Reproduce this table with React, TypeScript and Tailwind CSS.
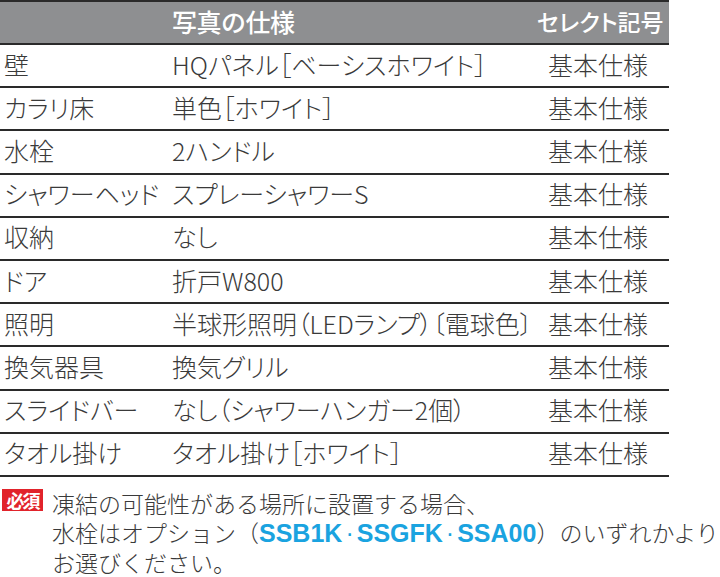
import React from "react";

const rows: [string, string, string][] = [
  ["壁", "HQパネル［ベーシスホワイト］", "基本仕様"],
  ["カラリ床", "単色［ホワイト］", "基本仕様"],
  ["水栓", "2ハンドル", "基本仕様"],
  ["シャワーヘッド", "スプレーシャワーS", "基本仕様"],
  ["収納", "なし", "基本仕様"],
  ["ドア", "折戸W800", "基本仕様"],
  ["照明", "半球形照明（LEDランプ）〔電球色〕", "基本仕様"],
  ["換気器具", "換気グリル", "基本仕様"],
  ["スライドバー", "なし（シャワーハンガー2個）", "基本仕様"],
  ["タオル掛け", "タオル掛け［ホワイト］", "基本仕様"],
];

export default function App() {
  return (
    <div
      className="w-[720px] h-[577px] bg-white overflow-hidden text-[#3a3a3a]"
      style={{ fontFamily: '"Noto Sans CJK JP", "Noto Sans", sans-serif' }}
    >
      <div className="w-[669px]">
        <div className="flex items-center h-[45px] bg-[#8e8f91] border-t-2 border-b-2 border-[#2a2a2a] text-white pb-[2px]">
          <div className="w-[172px]" />
          <div className="w-[365px] text-[25px] font-medium tracking-[-0.5px] leading-none">写真の仕様</div>
          <div className="flex-1 text-[23px] font-medium tracking-[0px] leading-none [font-feature-settings:'palt']">
            セレクト記号
          </div>
        </div>
        {rows.map(([a, b, c], i) => (
          <div
            key={i}
            className="flex items-center h-[43.2px] pb-[3px] border-b-2 border-[#2a2a2a] text-[25px] font-light leading-none [font-feature-settings:'palt']"
          >
            <div className="w-[172px] pl-[4px] whitespace-nowrap">{a}</div>
            <div className="w-[376px] whitespace-nowrap">{b}</div>
            <div className="flex-1 whitespace-nowrap">{c}</div>
          </div>
        ))}
      </div>
      <div className="flex mt-[12px] pl-[2px]">
        <div className="shrink-0 w-[41px] h-[22px] bg-[#e1232b] text-white text-[18px] font-bold leading-[22px] text-center tracking-[-2px]">
          必須
        </div>
        <div className="ml-[9px] text-[23px] font-light whitespace-nowrap">
          <div className="h-[29.5px] flex items-center leading-[29.5px]">凍結の可能性がある場所に設置する場合、</div>
          <div className="h-[29.5px] flex items-center leading-[29.5px]">
            <span>水栓はオプション（</span>
            <span
              className="text-[#1aa3e0] font-bold text-[25px] leading-none tracking-normal"
              style={{ fontFamily: '"Liberation Sans", Arial, sans-serif' }}
            >
              SSB1K<span className="mx-[3px] font-normal">·</span>SSGFK<span className="mx-[3px] font-normal">·</span>SSA00
            </span>
            <span>）のいずれかより</span>
          </div>
          <div className="h-[29.5px] flex items-center leading-[29.5px]">お選びください。</div>
        </div>
      </div>
    </div>
  );
}
